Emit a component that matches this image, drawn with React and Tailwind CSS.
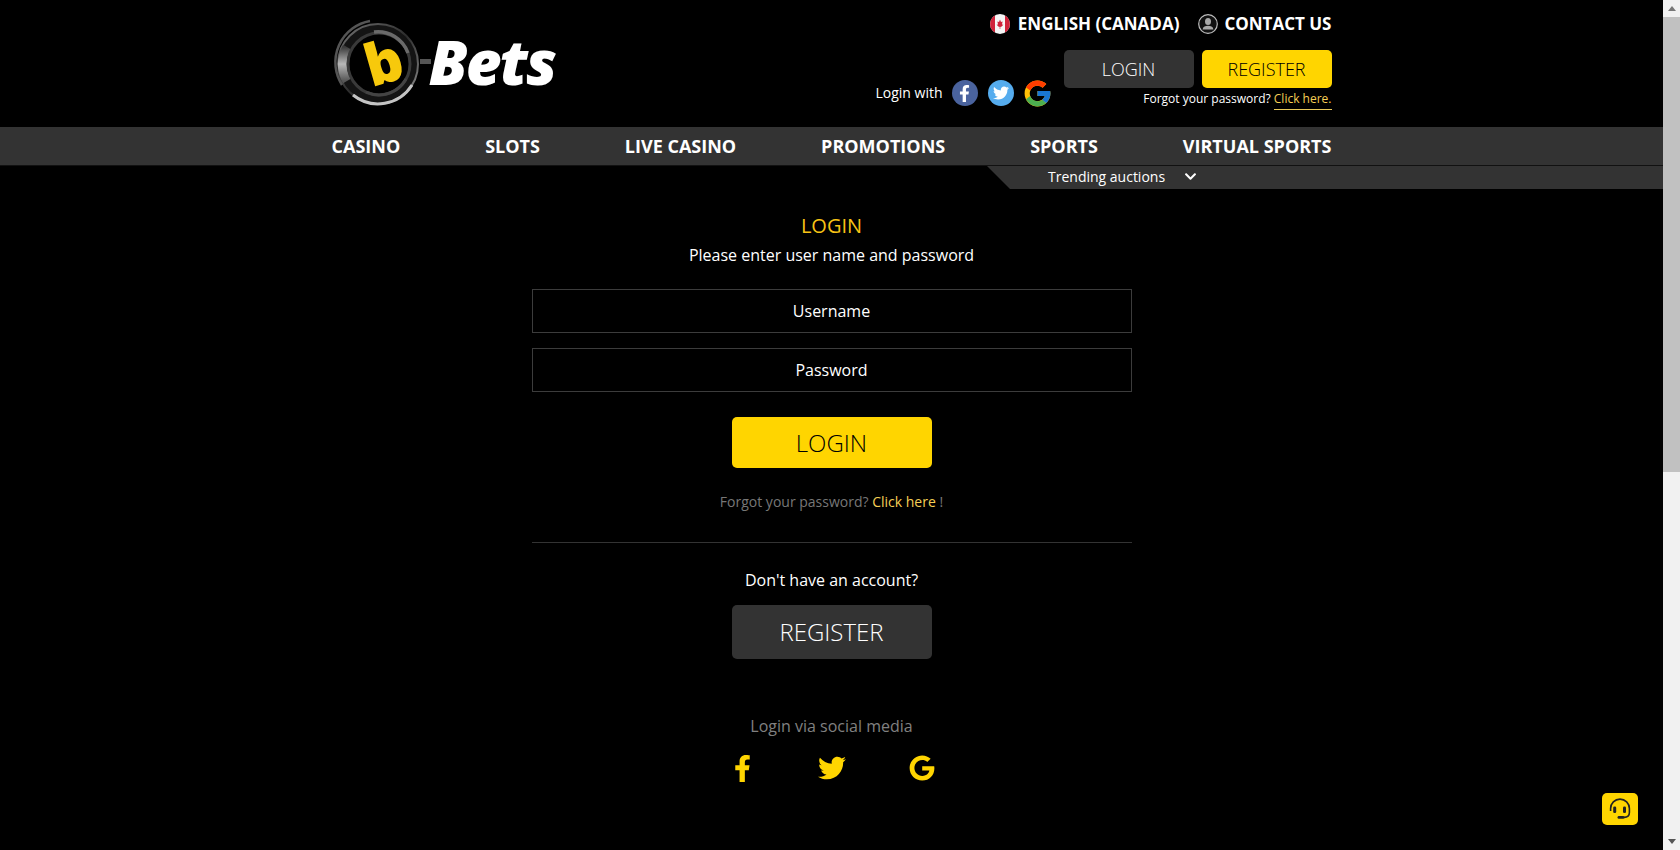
import React from 'react'
import { FaFacebookF, FaTwitter, FaGoogle, FaChevronDown } from 'react-icons/fa'
import { FcGoogle } from 'react-icons/fc'

const navItems = ['CASINO', 'SLOTS', 'LIVE CASINO', 'PROMOTIONS', 'SPORTS', 'VIRTUAL SPORTS']

function LogoMark() {
  return (
    <svg width="92" height="92" viewBox="0 0 92 92" className="shrink-0 overflow-visible">
      <defs>
        <linearGradient id="ring" x1="0" y1="0" x2="1" y2="1">
          <stop offset="0" stopColor="#777" />
          <stop offset="0.5" stopColor="#2c2c2c" />
          <stop offset="1" stopColor="#9a9a9a" />
        </linearGradient>
        <linearGradient id="band" x1="0" y1="0" x2="0" y2="1">
          <stop offset="0" stopColor="#3a3a3a" />
          <stop offset="0.5" stopColor="#b8b8b8" />
          <stop offset="1" stopColor="#555" />
        </linearGradient>
      </defs>
      <circle cx="46" cy="47" r="40" fill="#141414" stroke="url(#ring)" strokeWidth="2" />
      <path d="M10 68 A42 42 0 0 1 38 4" fill="none" stroke="#555" strokeWidth="2.5" />
      <path d="M15 64 A33 33 0 0 1 15 30" fill="none" stroke="url(#band)" strokeWidth="9" />
      <path d="M21 78 A40 40 0 0 0 80 68" fill="none" stroke="#c4c4c4" strokeWidth="3" />
      <circle cx="47" cy="47" r="31" fill="#000" stroke="#3a3a3a" strokeWidth="3" />
      <path d="M42 15 A32 32 0 0 1 76 36" fill="none" stroke="#6a6a6a" strokeWidth="3.5" />
      <path d="M34 75 A31 31 0 0 0 74 62" fill="none" stroke="#444" strokeWidth="3" />
      <text x="52" y="66" textAnchor="middle" fontFamily="Open Sans" fontWeight="800" fontSize="58" fill="#f7c90c" transform="rotate(-16 52 46)">b</text>
    </svg>
  )
}

function CanadaFlag() {
  return (
    <svg width="20" height="20" viewBox="0 0 20 20">
      <circle cx="10" cy="10" r="10" fill="#f5f5f5" />
      <path d="M5 1.4 A10 10 0 0 0 5 18.6 Z M15 1.4 A10 10 0 0 1 15 18.6 Z" fill="#d0223a" />
      <path d="M10 5.5 L11 8 L12.6 7.4 L12 10.4 L13.4 10.8 L11 13 L10.3 12.8 V15 H9.7 V12.8 L9 13 L6.6 10.8 L8 10.4 L7.4 7.4 L9 8 Z" fill="#d0223a" />
    </svg>
  )
}

function UserCircle() {
  return (
    <svg width="20" height="20" viewBox="0 0 20 20">
      <circle cx="10" cy="10" r="9.3" fill="#111" stroke="#bdbdbd" strokeWidth="1.2" />
      <ellipse cx="10" cy="7.6" rx="3" ry="3.5" fill="#a8a8a8" />
      <path d="M4.6 15.4 C5 12.6 7.4 11.8 10 11.8 C12.6 11.8 15 12.6 15.4 15.4 Z" fill="#a8a8a8" />
    </svg>
  )
}

function SupportIcon() {
  return (
    <svg width="24" height="24" viewBox="0 0 24 24" fill="none">
      <path d="M2.6 14 V11.5 A9.4 9.4 0 0 1 21.4 11.5 V15.5 C21.4 19 19.4 20.4 16 20.4" stroke="#222" strokeWidth="1.6" />
      <rect x="5.2" y="9.5" width="3" height="6.5" rx="1.3" fill="#222" />
      <rect x="15" y="9.5" width="3" height="6.5" rx="1.3" fill="#222" />
      <rect x="9.5" y="19" width="7" height="2.8" rx="1.4" fill="#222" />
    </svg>
  )
}

export default function App() {
  return (
    <div className="flex h-screen overflow-hidden bg-black font-['Open_Sans',sans-serif] text-white">
      <div className="relative min-w-0 flex-1">
        <header className="mx-auto flex h-[127px] w-[1000px] justify-between">
          <div className="flex items-start pt-[17px]">
            <LogoMark />
            <span className="-ml-[4px] mt-[2px] flex items-center text-[62px] leading-[84px] font-extrabold italic tracking-[-2px] whitespace-nowrap">
              <span className="h-[5px] w-[11px] bg-[#555]" />
              <span className="ml-[-2px]">Bets</span>
            </span>
          </div>

          <div className="flex flex-col items-end pt-[13px]">
            <div className="flex h-[22px] items-center text-[17px] font-bold">
              <CanadaFlag />
              <span className="ml-[8px]">ENGLISH (CANADA)</span>
              <span className="ml-[19px]"><UserCircle /></span>
              <span className="ml-[6px]">CONTACT US</span>
            </div>
            <div className="mt-[15px] flex">
              <div className="mr-[11px] flex items-center pt-[27px]">
                <span className="mr-[9px] text-[14px] font-medium leading-[26px]">Login with</span>
                <span className="flex h-[26px] w-[26px] items-center justify-center rounded-full bg-[#4a639e]"><FaFacebookF size={17} /></span>
                <span className="ml-[10px] flex h-[26px] w-[26px] items-center justify-center rounded-full bg-[#55acee]"><FaTwitter size={16} /></span>
                <span className="ml-[8px]"><FcGoogle size={31} /></span>
              </div>
              <div className="flex flex-col items-end">
                <div className="flex gap-[8px]">
                  <button className="h-[38px] w-[130px] rounded-[5px] bg-[#333] text-[18px] font-light">LOGIN</button>
                  <button className="h-[38px] w-[130px] rounded-[5px] bg-[#ffd500] text-[18px] font-light text-black">REGISTER</button>
                </div>
                <p className="mt-[1px] text-[12px] leading-[20px] whitespace-nowrap">
                  Forgot your password? <span className="border-b border-[#e8c95a] pb-[2px] text-[#f5cf55]">Click here.</span>
                </p>
              </div>
            </div>
          </div>
        </header>

        <nav className="h-[39px] border-b border-[#111] bg-[#333]">
          <ul className="mx-auto flex h-full w-[1000px] items-center justify-between text-[18px] font-bold">
            {navItems.map((item) => (
              <li key={item}>{item}</li>
            ))}
          </ul>
        </nav>

        <div className="flex justify-end">
          <div className="flex h-[23px] w-[676px] items-center bg-[#333] pb-[3px] pl-[61px] text-[14px] [clip-path:polygon(0_0,100%_0,100%_100%,23px_100%)]">
            <span>Trending auctions</span>
            <FaChevronDown size={13} className="ml-[19px]" />
          </div>
        </div>

        <main className="mx-auto flex w-[600px] flex-col items-center pt-[24px]">
          <h1 className="text-[20px] leading-[25px] font-normal text-[#f7c315]">LOGIN</h1>
          <p className="mt-[5px] text-[16px] leading-[24px] font-medium">Please enter user name and password</p>

          <input placeholder="Username" className="mt-[22px] h-[44px] w-full border border-[#3c3c3c] bg-black text-center text-[16px] font-medium outline-none placeholder:text-white" />
          <input placeholder="Password" className="mt-[15px] h-[44px] w-full border border-[#3c3c3c] bg-black text-center text-[16px] font-medium outline-none placeholder:text-white" />

          <button className="mt-[25px] h-[51px] w-[200px] rounded-[5px] bg-[#ffd500] text-[24px] font-light text-black">LOGIN</button>

          <p className="mt-[24px] text-[14px] leading-[20px] text-[#777]">
            Forgot your password? <span className="font-medium text-[#f5cf55]">Click here</span> !
          </p>

          <hr className="mt-[30px] w-full border-[#333]" />

          <p className="mt-[25px] text-[16px] leading-[24px] font-medium">Don't have an account?</p>
          <button className="mt-[13px] h-[54px] w-[200px] rounded-[5px] bg-[#333] text-[24px] font-light">REGISTER</button>

          <p className="mt-[55px] text-[16px] leading-[24px] text-[#808080]">Login via social media</p>
          <div className="mt-[16px] flex w-[206px] items-center justify-between text-[#ffd500]">
            <FaFacebookF size={27} />
            <FaTwitter size={28} />
            <FaGoogle size={26} />
          </div>
        </main>

        <button className="absolute top-[793px] right-[25px] flex h-[32px] w-[36px] items-center justify-center rounded-[5px] bg-[#ffd500]">
          <SupportIcon />
        </button>
      </div>

      <aside className="flex w-[17px] shrink-0 flex-col items-center bg-[#f1f1f1]">
        <div className="mt-[6px] h-0 w-0 border-x-[4px] border-b-[5px] border-x-transparent border-b-[#777]" />
        <div className="mt-[6px] h-[455px] w-full bg-[#c1c1c1]" />
        <div className="mt-auto mb-[6px] h-0 w-0 border-x-[4px] border-t-[5px] border-x-transparent border-t-[#555]" />
      </aside>
    </div>
  )
}
